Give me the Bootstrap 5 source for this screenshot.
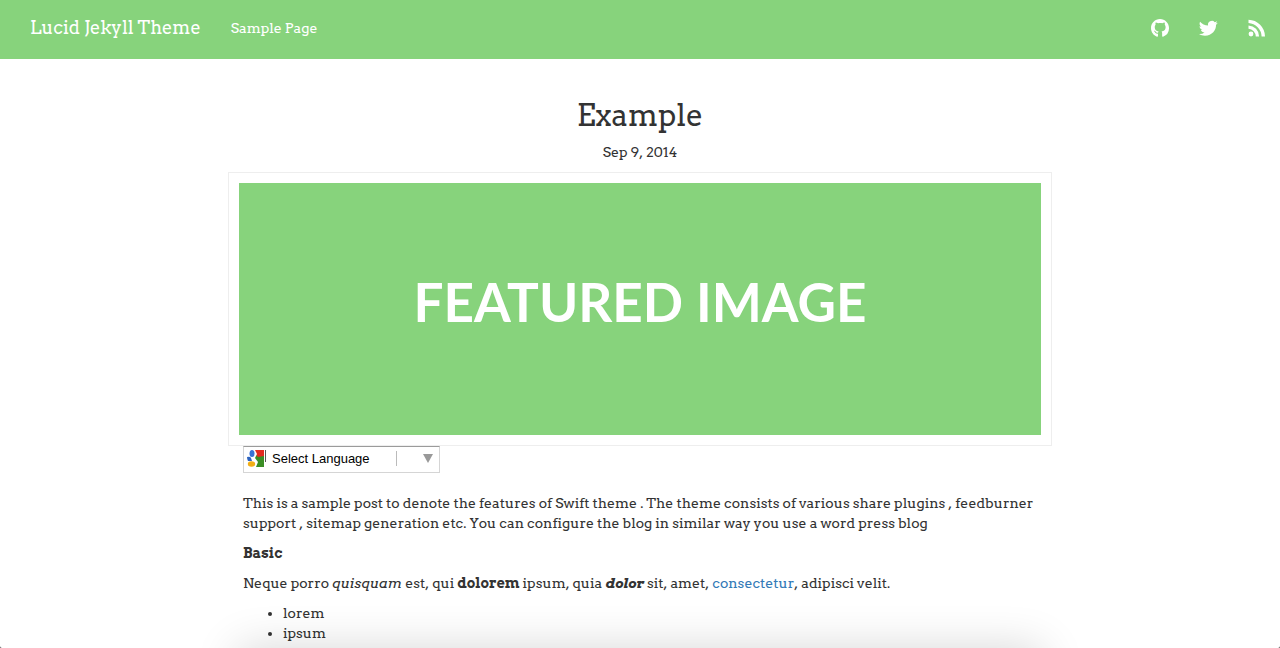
<!DOCTYPE html>
<html lang="en">
<head>
<meta charset="utf-8">
<meta name="viewport" content="width=device-width, initial-scale=1">
<title>Example - Lucid Jekyll Theme</title>
<link href="https://cdn.jsdelivr.net/npm/bootstrap@5.3.0/dist/css/bootstrap.min.css" rel="stylesheet">
<style>
  body { font: 14px/20px Arvo, "DejaVu Serif Condensed", "DejaVu Serif", serif; font-kerning: none; color: #333; background: #fff; }
  .site-bar { background: #87d37c; height: 59px; padding: 0 15px; }
  .site-bar a { color: #fff; text-decoration: none; }
  .site-bar .navbar-brand { font-size: 18px; line-height: 20px; padding: 0 15px; margin: 0 15px 3px 0; }
  .social { gap: 30px; margin-bottom: 3px; }
  .social svg { display: block; fill: #fff; }
  .post { max-width: 824px; padding: 0 15px; }
  .post-title { font-size: 30px; line-height: 34px; margin: 39px 0 10px; font-weight: 400; }
  .post p, .post ul { margin-bottom: 10px; }
  .post a { color: #337ab7; text-decoration: none; }
  .featured { margin: 0 -15px; padding: 10px; border: 1px solid #eee; }
  .featured-art { height: 252px; padding-bottom: 14px; background: #87d37c; color: #fff; font: 700 53px/60px Lato, sans-serif; font-kerning: auto; }
  .language { width: 197px; height: 27px; padding: 0 6px 2px 3px; border: 1px solid #d5d5d5; border-top-color: #9b9b9b; margin-bottom: 20px; }
  .language select { appearance: none; border: 0; background: none; padding: 0; margin-left: 6px; width: 124px; color: #000; font: 13px/20px "Liberation Sans", Arial, sans-serif; }
  .tick { width: 1px; height: 12px; background: #555; margin-top: -5px; }
  .divider { width: 1px; height: 15px; background: #bbb; }
  .post ul { padding-left: 40px; }
  .lower-shade { position: fixed; top: 100%; left: 0; right: 0; max-width: 804px; height: 120px; margin: 0 auto; box-shadow: 0 0 45px rgba(0,0,0,.16); pointer-events: none; }
  .window-corners { position: fixed; inset: 0; border-radius: 0 0 2px 2px; box-shadow: 0 0 0 4px #444; pointer-events: none; }
</style>
</head>
<body>
<nav class="navbar site-bar d-flex flex-nowrap justify-content-start">
  <a class="navbar-brand" href="#">Lucid Jekyll Theme</a>
  <a class="mb-1" href="#">Sample Page</a>
  <div class="social d-flex align-items-center ms-auto">
    <a href="#" aria-label="GitHub"><svg width="18" height="18" viewBox="0 0 16 16"><path d="M8 0C3.580 0 0 3.580 0 8c0 3.540 2.100 6.530 5.300 7.700.5.100.9-.1.900-.5v-2.300c-1 .4-2.100 0-2.500-.9-.2-.6-.5-1-.9-1.200-.4-.4 0-.5.400-.4.600.200.900.800 1.200 1.200.5.700 1.200.700 1.900.4.100-.5.300-.8.500-1-2-.200-3.500-1.100-3.500-3.900 0-.8.300-1.500.8-2.100-.2-.6-.2-1.300.1-2 .8 0 1.500.300 2.100.8 1.200-.3 2.500-.3 3.700 0 .6-.5 1.300-.8 2.100-.8.300.7.300 1.400.1 2 .5.600.8 1.300.8 2.100 0 2.800-1.600 3.700-3.600 3.900.3.300.5.800.5 1.500v2.700c0 .4.300.6.800.5A8.010 8.010 0 0 0 16 8c0-4.420-3.580-8-8-8z"/></svg></a>
    <a href="#" aria-label="Twitter"><svg width="19" height="18" viewBox="0 0 24 24" preserveAspectRatio="none"><path d="M23.6 4.9c-.9.4-1.8.7-2.8.8 1-.6 1.8-1.6 2.2-2.7-1 .6-2 1-3.1 1.2A4.900 4.900 0 0 0 11.500 8.600C7.400 8.400 3.800 6.500 1.400 3.500c-1.300 2.200-.7 5.100 1.500 6.600-.8 0-1.600-.2-2.200-.6 0 2.300 1.600 4.400 3.900 4.900-.7.200-1.500.2-2.200.1.600 2 2.400 3.400 4.600 3.400A9.900 9.900 0 0 1 0 20c2.200 1.400 4.800 2.200 7.500 2.200 9.100 0 14.300-7.700 14-14.600.9-.7 1.600-1.600 2.100-2.700z"/></svg></a>
    <a href="#" aria-label="RSS feed"><svg width="17" height="18" viewBox="0 0 17 18"><circle cx="3" cy="15" r="2.400"/><path d="M.5 6.500v3.200a8 8 0 0 1 7.300 7.800h3.300A11 11 0 0 0 .5 6.500zM.5.700V4A14 14 0 0 1 13.600 17.500H17A17 17 0 0 0 .5.700z"/></svg></a>
  </div>
</nav>
<main class="post mx-auto">
  <header class="text-center">
    <h1 class="post-title">Example</h1>
    <p>Sep 9, 2014</p>
  </header>
  <div class="featured"><div class="featured-art d-flex align-items-center justify-content-center">FEATURED IMAGE</div></div>
  <div class="language d-flex align-items-center">
    <svg width="18" height="17" viewBox="0 0 18 17" aria-hidden="true"><path fill="#3b8e25" d="M8 0h9v17H8z"/><path fill="#e22b20" d="M8 0h9v6l-6 1-3-3z"/><path fill="#fff" d="M0 0h8l2 4-2 4 3 4-2 5H0z"/><path fill="#2d63bf" d="M0 7q3-1 4 1l1 3H1Q0 9 0 7z"/><ellipse cx="5" cy="3.500" rx="2.500" ry="3.500" fill="#3972d5"/><ellipse cx="4.500" cy="14" rx="3.700" ry="2.700" fill="#f2ae15"/></svg>
    <span class="tick"></span>
    <select aria-label="Select Language"><option>Select Language</option></select>
    <span class="divider"></span>
    <svg class="ms-auto" width="10" height="9" viewBox="0 0 10 9" aria-hidden="true"><path fill="#999" d="M0 0h10L5 9z"/></svg>
  </div>
  <p>This is a sample post to denote the features of Swift theme . The theme consists of various share plugins , feedburner support , sitemap generation etc. You can configure the blog in similar way you use a word press blog</p>
  <p><strong>Basic</strong></p>
  <p>Neque porro <em>quisquam</em> est, qui <strong>dolorem</strong> ipsum, quia <strong><em>dolor</em></strong> sit, amet, <a href="#">consectetur</a>, adipisci velit.</p>
  <ul class="mb-0">
    <li>lorem</li>
    <li>ipsum</li>
  </ul>
</main>
<div class="lower-shade"></div>
<div class="window-corners"></div>
</body>
</html>
